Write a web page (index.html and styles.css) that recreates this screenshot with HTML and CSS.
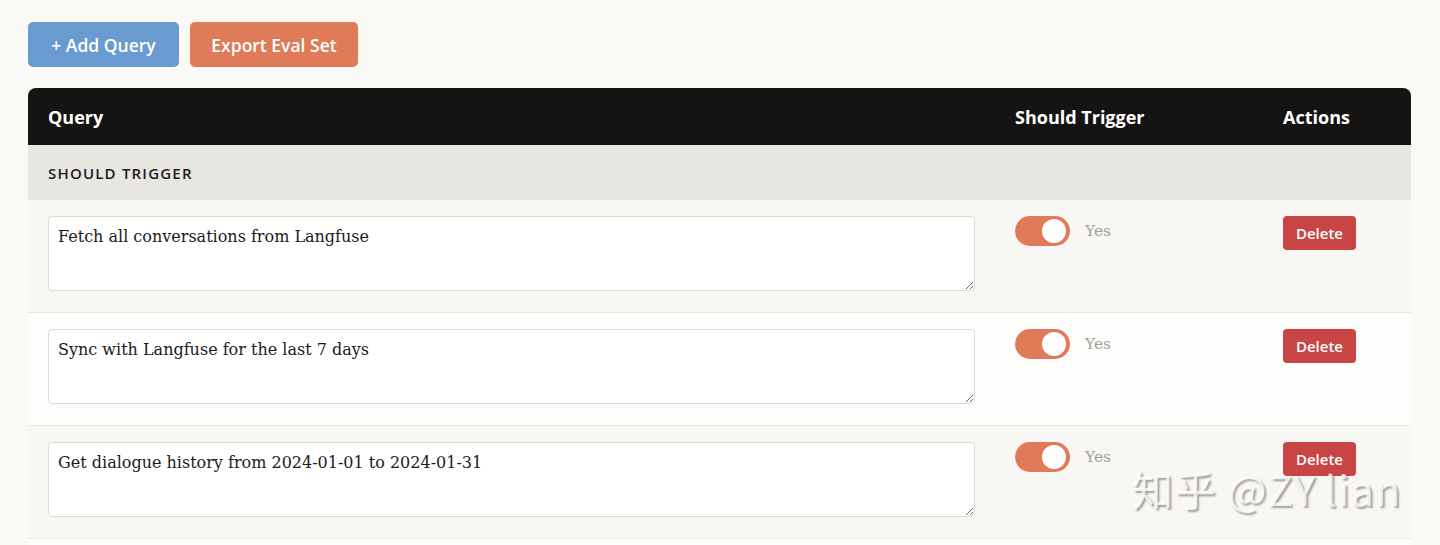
FILE: index.html
```html
<!DOCTYPE html>
<html lang="en">
<head>
<meta charset="utf-8">
<title>Eval Set</title>
<link rel="stylesheet" href="styles.css">
</head>
<body>
<div class="page">
  <div class="toolbar">
    <button class="btn btn-add">+ Add Query</button>
    <button class="btn btn-export">Export Eval Set</button>
  </div>
  <div class="table">
    <div class="row head">
      <div class="cell c-query">Query</div>
      <div class="cell c-trig">Should Trigger</div>
      <div class="cell c-act">Actions</div>
    </div>
    <div class="section">SHOULD TRIGGER</div>
    <div class="row item">
      <div class="cell c-query"><textarea class="query">Fetch all conversations from Langfuse</textarea></div>
      <div class="cell c-trig"><span class="toggle"><span class="knob"></span></span><span class="yes">Yes</span></div>
      <div class="cell c-act"><button class="del">Delete</button></div>
    </div>
    <div class="row item alt">
      <div class="cell c-query"><textarea class="query">Sync with Langfuse for the last 7 days</textarea></div>
      <div class="cell c-trig"><span class="toggle"><span class="knob"></span></span><span class="yes">Yes</span></div>
      <div class="cell c-act"><button class="del">Delete</button></div>
    </div>
    <div class="row item">
      <div class="cell c-query"><textarea class="query">Get dialogue history from 2024-01-01 to 2024-01-31</textarea></div>
      <div class="cell c-trig"><span class="toggle"><span class="knob"></span></span><span class="yes">Yes</span></div>
      <div class="cell c-act"><button class="del">Delete</button></div>
    </div>
    <div class="row item alt"></div>
  </div>
</div>
<div class="watermark">知乎 @ZY<span class="wm-gap">lian</span></div>
</body>
</html>
```

FILE: styles.css
```css
html, body {
  margin: 0;
  padding: 0;
  background: #faf9f5;
  height: 545px;
  overflow: hidden;
}
.page {
  padding: 22px 29px 0 28px;
  font-family: "Open Sans", "Liberation Sans", sans-serif;
}
.toolbar {
  display: flex;
  gap: 11px;
  margin-bottom: 21px;
}
.btn {
  border: none;
  border-radius: 5px;
  height: 45px;
  padding: 0 18px;
  color: #fff;
  font-family: "Open Sans", "Liberation Sans", sans-serif;
  font-weight: 600;
  font-size: 17.5px;
}
.btn-add { background: #6a9bd0; width: 151px; }
.btn-export { background: #df7b59; width: 168px; }
.table {
  border-radius: 8px 8px 0 0;
  overflow: hidden;
}
.row {
  display: flex;
}
.cell {
  padding: 0 20px;
  box-sizing: border-box;
}
.c-query { width: 967px; }
.c-trig { width: 268px; }
.c-act { width: 148px; }
.head {
  background: #141412;
  color: #fff;
  height: 57px;
  align-items: center;
  font-weight: 700;
  font-size: 18px;
}
.section {
  background: #e8e6e0;
  height: 55px;
  display: flex;
  align-items: center;
  padding-left: 20px;
  font-weight: 600;
  font-size: 15px;
  letter-spacing: 1.2px;
  color: #1c1c1a;
}
.item {
  background: #f8f7f3;
  height: 113px;
  box-sizing: border-box;
  padding-top: 16px;
  border-bottom: 1px solid #e9e7e2;
  align-items: flex-start;
}
.item.alt { background: #fdfdfc; }
.query {
  display: block;
  width: 927px;
  height: 75px;
  box-sizing: border-box;
  border: 1px solid #dddad4;
  border-radius: 4px;
  background: #fff;
  padding: 8px 9px;
  font-family: "DejaVu Serif", "Liberation Serif", serif;
  font-size: 16px;
  line-height: 24px;
  color: #1a1a1a;
  margin: 0;
}
.c-trig {
  display: flex;
  align-items: center;
  gap: 15px;
  height: 30px;
}
.toggle {
  width: 55px;
  height: 30px;
  border-radius: 15px;
  background: #df7b59;
  position: relative;
  flex: none;
}
.knob {
  position: absolute;
  top: 3px;
  right: 4px;
  width: 24px;
  height: 24px;
  border-radius: 50%;
  background: #fff;
}
.yes {
  font-family: "DejaVu Serif", "Liberation Serif", serif;
  color: #a39f98;
  font-size: 15.5px;
}
.del {
  border: none;
  background: #c94545;
  color: #fff;
  border-radius: 4px;
  width: 73px;
  height: 34px;
  font-family: "Open Sans", "Liberation Sans", sans-serif;
  font-weight: 600;
  font-size: 15px;
  padding: 0;
}
.watermark {
  position: absolute;
  left: 1132px;
  top: 458px;
  font-family: "Noto Sans CJK SC", "Liberation Sans", sans-serif;
  font-size: 41px;
  color: rgba(255, 255, 255, 0.8);
  text-shadow: 2px 2px 2px rgba(90, 90, 90, 0.55);
  letter-spacing: 1.5px;
  pointer-events: none;
}
.wm-gap { margin-left: 8px; }
```
